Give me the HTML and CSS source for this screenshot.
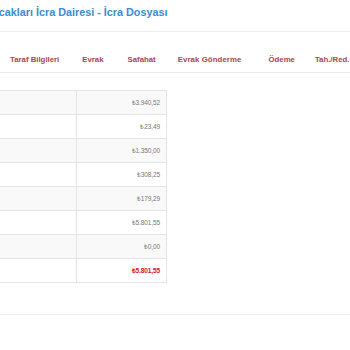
FILE: index.html
```html
<!DOCTYPE html>
<html lang="tr">
<head>
<meta charset="utf-8">
<link rel="stylesheet" href="styles.css">
</head>
<body>
<div class="page">
  <header class="header">
    <h1 class="title">Alacakları İcra Dairesi - İcra Dosyası</h1>
  </header>
  <nav class="tabs">
    <span class="tab">Taraf Bilgileri</span>
    <span class="tab">Evrak</span>
    <span class="tab">Safahat</span>
    <span class="tab">Evrak Gönderme</span>
    <span class="tab">Ödeme</span>
    <span class="tab">Tah./Red.</span>
  </nav>
  <section class="content">
    <table class="amounts">
      <tbody>
        <tr><td class="label"></td><td class="val">₺3.940,52</td></tr>
        <tr><td class="label"></td><td class="val">₺23,49</td></tr>
        <tr><td class="label"></td><td class="val">₺1.350,00</td></tr>
        <tr><td class="label"></td><td class="val">₺308,25</td></tr>
        <tr><td class="label"></td><td class="val">₺179,29</td></tr>
        <tr><td class="label"></td><td class="val">₺5.801,55</td></tr>
        <tr><td class="label"></td><td class="val">₺0,00</td></tr>
        <tr><td class="label"></td><td class="val total">₺5.801,55</td></tr>
      </tbody>
    </table>
  </section>
  <div class="footer"></div>
</div>
</body>
</html>
```
FILE: styles.css
```css
html, body {
  margin: 0;
  padding: 0;
  background: #fff;
}
body {
  font-family: "Liberation Sans", Arial, sans-serif;
  overflow: hidden;
}
.page {
  width: 350px;
}
.header {
  height: 31px;
  border-bottom: 1px solid #efefef;
  overflow: hidden;
}
.title {
  margin: 0;
  padding-top: 6px;
  font-size: 10.8px;
  font-weight: bold;
  color: #3a8dd0;
  white-space: nowrap;
  text-indent: -18px;
  line-height: 13px;
}
.tabs {
  display: flex;
  gap: 22px;
  padding: 23px 0 0 10px;
  height: 17px;
  border-bottom: 1px solid #ececec;
  white-space: nowrap;
}
.tab {
  font-size: 7.8px;
  line-height: 10px;
  font-weight: bold;
  color: #a9434f;
}
.tab:nth-child(2) {
  margin-left: 1px;
}
.tab:nth-child(3) {
  margin-left: 2px;
}
.tab:nth-child(4) {
  letter-spacing: 0.1px;
}
.tab:nth-child(5) {
  margin-left: 5px;
}
.tab:nth-child(6) {
  margin-left: -2px;
}
.content {
  padding-top: 17px;
  height: 224px;
  border-bottom: 1px solid #efefef;
}
.amounts {
  border-collapse: collapse;
  width: 167px;
}
.amounts td {
  height: 23px;
  padding: 0 6px;
  border-top: 1px solid #e4e4e4;
  border-bottom: 1px solid #e4e4e4;
  font-size: 6.5px;
  letter-spacing: -0.1px;
  color: #777;
}
.amounts tr:nth-child(odd) td {
  background: #f9f9f9;
}
.amounts td.label {
  width: 64px;
}
.amounts td.val {
  text-align: right;
  border-left: 1px solid #e4e4e4;
  border-right: 1px solid #e4e4e4;
}
.amounts td.total {
  color: #d0141c;
  font-weight: bold;
}
```
